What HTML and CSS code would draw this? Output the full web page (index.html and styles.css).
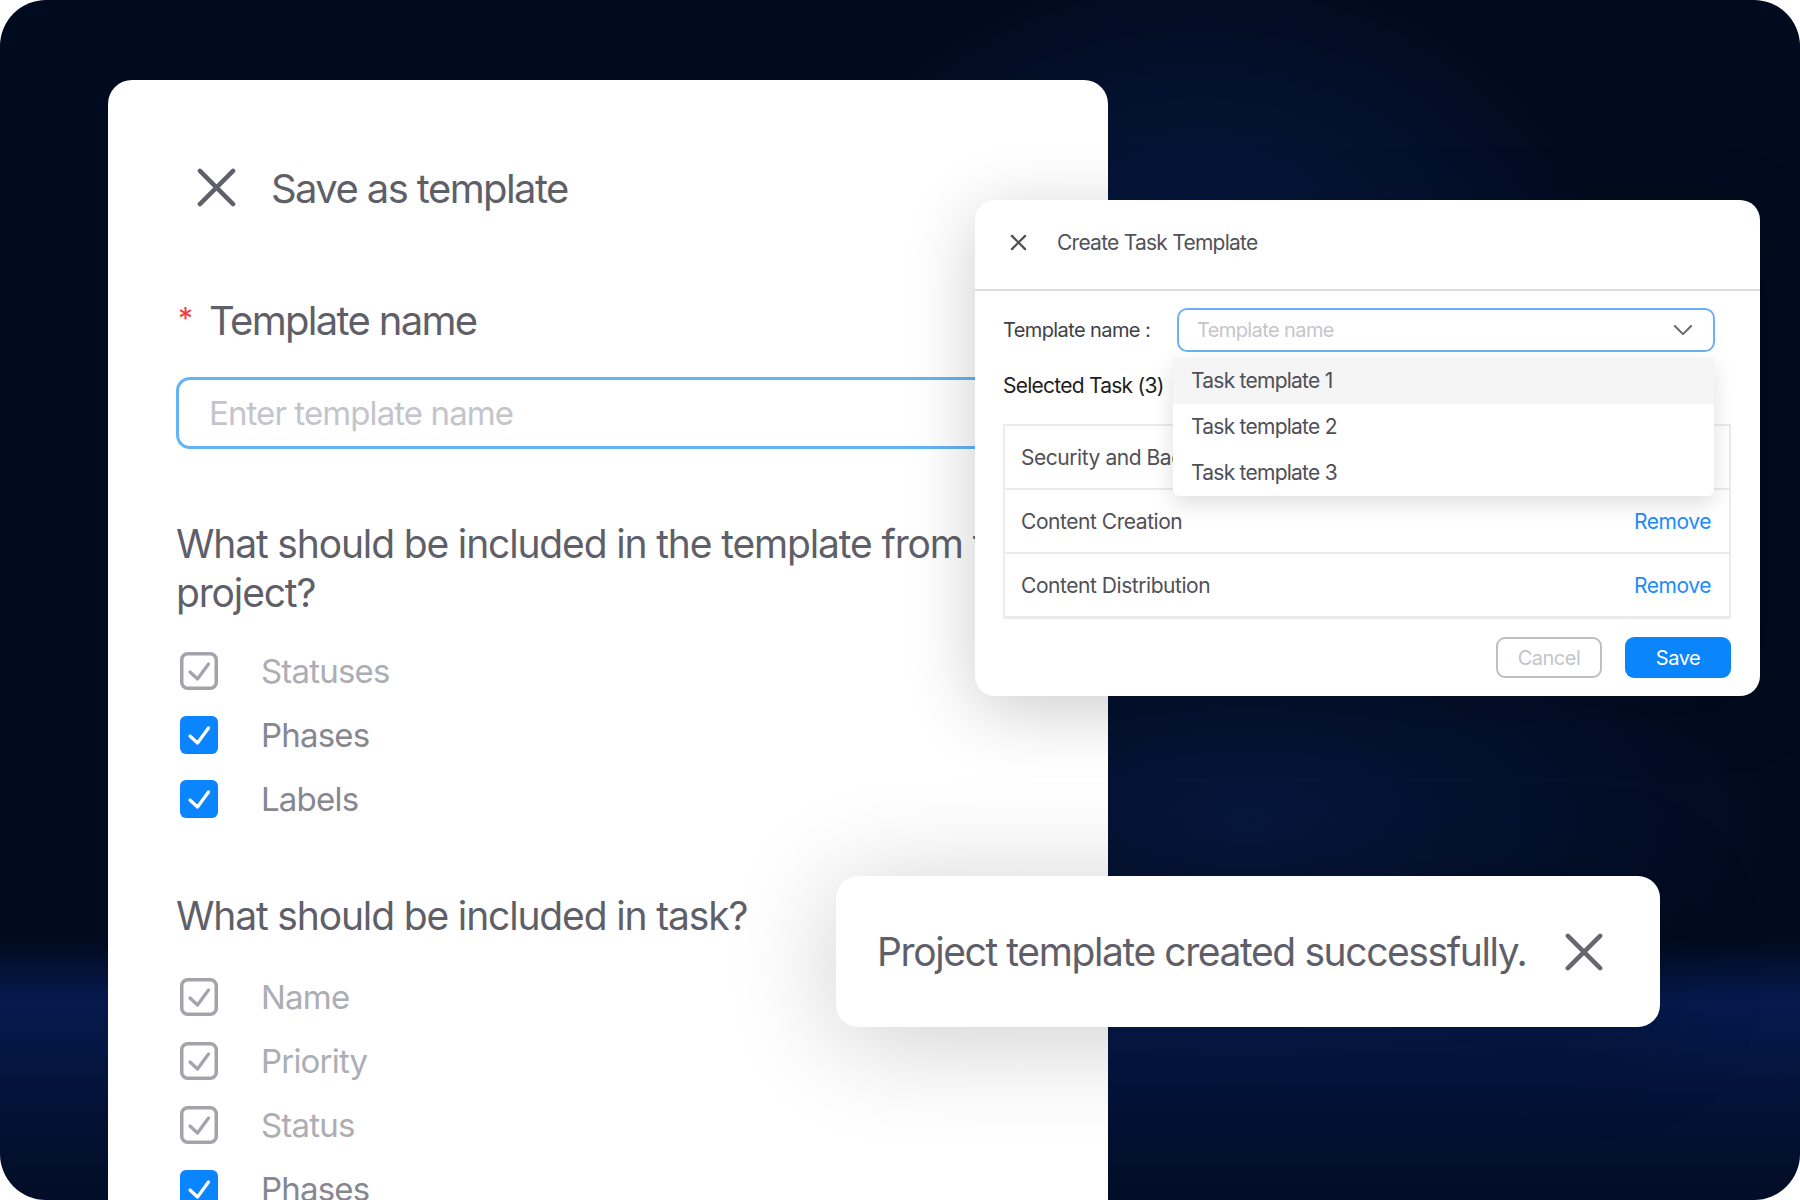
FILE: index.html
```html
<!DOCTYPE html>
<html lang="en">
<head>
<meta charset="utf-8">
<title>Save as template</title>
<link rel="stylesheet" href="styles.css">
</head>
<body>
<div class="frame">
  <section class="panel">
    <header class="panel-head">
      <svg class="x-big" viewBox="0 0 40 40"><path d="M3 3 L37 37 M37 3 L3 37"/></svg>
      <h1 class="panel-title">Save as template</h1>
    </header>
    <div class="field-label"><span class="req">*</span>Template name</div>
    <div class="text-input">Enter template name</div>
    <h2 class="question q1">What should be included in the template from the project?</h2>
    <ul class="checks">
      <li class="check disabled"><svg class="box" viewBox="0 0 38 38"><rect x="1.75" y="1.75" width="34.5" height="34.5" rx="6"/><path d="M10 20 L17.5 27 L28.5 12"/></svg><span>Statuses</span></li>
      <li class="check on"><svg class="box" viewBox="0 0 38 38"><rect x="0" y="0" width="38" height="38" rx="6"/><path d="M10 20 L17.5 27 L28.5 12"/></svg><span>Phases</span></li>
      <li class="check on"><svg class="box" viewBox="0 0 38 38"><rect x="0" y="0" width="38" height="38" rx="6"/><path d="M10 20 L17.5 27 L28.5 12"/></svg><span>Labels</span></li>
    </ul>
    <h2 class="question q2">What should be included in task?</h2>
    <ul class="checks checks-task">
      <li class="check disabled"><svg class="box" viewBox="0 0 38 38"><rect x="1.75" y="1.75" width="34.5" height="34.5" rx="6"/><path d="M10 20 L17.5 27 L28.5 12"/></svg><span>Name</span></li>
      <li class="check disabled"><svg class="box" viewBox="0 0 38 38"><rect x="1.75" y="1.75" width="34.5" height="34.5" rx="6"/><path d="M10 20 L17.5 27 L28.5 12"/></svg><span>Priority</span></li>
      <li class="check disabled"><svg class="box" viewBox="0 0 38 38"><rect x="1.75" y="1.75" width="34.5" height="34.5" rx="6"/><path d="M10 20 L17.5 27 L28.5 12"/></svg><span>Status</span></li>
      <li class="check on"><svg class="box" viewBox="0 0 38 38"><rect x="0" y="0" width="38" height="38" rx="6"/><path d="M10 20 L17.5 27 L28.5 12"/></svg><span>Phases</span></li>
    </ul>
  </section>

  <div class="modal">
    <div class="modal-head">
      <svg class="x-small" viewBox="0 0 18 18"><path d="M2 2 L16 16 M16 2 L2 16"/></svg>
      <span class="modal-title">Create Task Template</span>
    </div>
    <div class="modal-body">
      <div class="name-row">
        <span class="name-label">Template name :</span>
        <div class="select">
          <span class="select-ph">Template name</span>
          <svg class="chev" viewBox="0 0 22 14"><path d="M2 2 L11 11 L20 2"/></svg>
        </div>
      </div>
      <div class="selected-title">Selected Task (3)</div>
      <div class="task-table">
        <div class="task-row"><span>Security and Backup</span><a class="remove">Remove</a></div>
        <div class="task-row"><span>Content Creation</span><a class="remove">Remove</a></div>
        <div class="task-row"><span>Content Distribution</span><a class="remove">Remove</a></div>
      </div>
      <div class="modal-foot">
        <button class="btn btn-cancel">Cancel</button>
        <button class="btn btn-save">Save</button>
      </div>
      <ul class="dropdown">
        <li class="dd-item active">Task template 1</li>
        <li class="dd-item">Task template 2</li>
        <li class="dd-item">Task template 3</li>
      </ul>
    </div>
  </div>

  <div class="toast">
    <span class="toast-text">Project template created successfully.</span>
    <svg class="x-toast" viewBox="0 0 40 40"><path d="M3 3 L37 37 M37 3 L3 37"/></svg>
  </div>
</div>
</body>
</html>
```

FILE: styles.css
```css
* { box-sizing: border-box; }

html, body {
  margin: 0;
  padding: 0;
  background: #ffffff;
}

body {
  font-family: Inter, "Noto Sans", "Liberation Sans", sans-serif;
}

.frame {
  position: relative;
  width: 1800px;
  height: 1200px;
  border-radius: 46px;
  overflow: hidden;
  padding: 80px 0 0 108px;
  background:
    linear-gradient(to bottom, rgba(6, 28, 86, 0) 0, rgba(6, 28, 86, 0) 940px, rgba(6, 28, 86, 0.85) 1000px, rgba(6, 28, 86, 0.4) 1110px, rgba(6, 28, 86, 0.15) 1200px),
    radial-gradient(ellipse 420px 360px at 1200px 330px, rgba(12, 34, 88, 0.75), rgba(12, 34, 88, 0) 100%),
    radial-gradient(ellipse 520px 260px at 1250px 820px, rgba(10, 30, 80, 0.6), rgba(10, 30, 80, 0) 100%),
    #010b1f;
}

/* ---------- left panel ---------- */
.panel {
  width: 1000px;
  height: 1200px;
  background: #ffffff;
  border-radius: 24px 24px 0 0;
  padding: 81px 60px 0 68px;
  color: #5f5f69;
}

.panel-head {
  display: flex;
  align-items: center;
  gap: 35px;
  height: 56px;
  padding-left: 21px;
}

.x-big {
  width: 39px;
  height: 39px;
  flex: none;
  margin-top: -3px;
}
.x-big path {
  fill: none;
  stroke: #606069;
  stroke-width: 4.6;
  stroke-linecap: round;
}

.panel-title {
  margin: 0;
  font-size: 40px;
  font-weight: 400;
  letter-spacing: -1.6px;
  color: #5f5f69;
  line-height: 56px;
}

.field-label {
  margin-top: 80px;
  font-size: 40px;
  line-height: 48px;
  letter-spacing: -1.7px;
  color: #5f5f69;
  display: flex;
  align-items: flex-start;
}

.req {
  color: #f2413d;
  font-size: 30px;
  line-height: 30px;
  margin: 6px 16px 0 2px;
  letter-spacing: 0;
}

.text-input {
  margin-top: 32px;
  height: 72px;
  border: 3px solid #62b3f8;
  border-radius: 14px;
  padding-left: 30px;
  display: flex;
  align-items: center;
  font-size: 33px;
  letter-spacing: -0.9px;
  color: #c4c4cb;
}

.question {
  margin: 0;
  font-size: 39px;
  font-weight: 400;
  line-height: 49px;
  letter-spacing: -1.15px;
  color: #5f5f69;
}
.q1 { margin-top: 70px; }
.q2 { margin-top: 60px; }

.checks {
  list-style: none;
  margin: 22px 0 0 0;
  padding: 0;
}
.checks-task { margin-top: 25px; }

.check {
  height: 64px;
  display: flex;
  align-items: center;
  font-size: 33px;
  letter-spacing: -0.8px;
}

.box {
  width: 38px;
  height: 38px;
  margin-left: 4px;
  margin-right: 43px;
  flex: none;
}
.box path {
  fill: none;
  stroke-width: 3.2;
  stroke-linecap: round;
  stroke-linejoin: round;
}

.check.disabled { color: #adadb4; }
.check.disabled rect { fill: none; stroke: #a3a3ab; stroke-width: 3.5; }
.check.disabled path { stroke: #a3a3ab; }

.check.on { color: #878791; }
.check.on rect { fill: #0a84ff; }
.check.on path { stroke: #ffffff; }

/* ---------- modal ---------- */
.modal {
  position: absolute;
  left: 975px;
  top: 200px;
  width: 785px;
  background: #ffffff;
  border-radius: 20px;
  box-shadow: 0 14px 70px rgba(0, 0, 0, 0.2);
}

.modal-head {
  height: 91px;
  display: flex;
  align-items: center;
  gap: 30px;
  padding-left: 35px;
  padding-bottom: 4px;
  border-bottom: 2px solid #dcdcdc;
}

.x-small {
  width: 17px;
  height: 17px;
  flex: none;
}
.x-small path {
  fill: none;
  stroke: #4f4f55;
  stroke-width: 2.4;
  stroke-linecap: round;
}

.modal-title {
  font-size: 21px;
  letter-spacing: -0.75px;
  color: #52525a;
}

.modal-body {
  position: relative;
  padding: 17px 29px 18px 28px;
}

.name-row {
  display: flex;
  align-items: center;
  height: 44px;
}

.name-label {
  width: 174px;
  flex: none;
  font-size: 20px;
  letter-spacing: -0.6px;
  color: #3f3f46;
}

.select {
  width: 538px;
  height: 44px;
  border: 2px solid #6ab2f5;
  border-radius: 10px;
  display: flex;
  align-items: center;
  justify-content: space-between;
  padding: 0 20px 0 18px;
}

.select-ph {
  font-size: 20px;
  letter-spacing: -0.6px;
  color: #c6c6c9;
}

.chev {
  width: 20px;
  height: 13px;
}
.chev path {
  fill: none;
  stroke: #66666c;
  stroke-width: 2.2;
  stroke-linecap: round;
  stroke-linejoin: round;
}

.selected-title {
  margin-top: 19px;
  line-height: 30px;
  font-size: 21px;
  letter-spacing: -0.75px;
  color: #1e1e22;
}

.task-table {
  margin-top: 23px;
  border: 2px solid #ebebeb;
  border-bottom-width: 1px;
}

.task-row {
  height: 64px;
  display: flex;
  align-items: center;
  justify-content: space-between;
  padding: 0 18px 0 16px;
  border-bottom: 2px solid #ebebeb;
  font-size: 21px;
  letter-spacing: -0.45px;
  color: #505057;
}

.remove {
  color: #1c8bfb;
}

.modal-foot {
  margin-top: 18px;
  display: flex;
  justify-content: flex-end;
  gap: 23px;
}

.btn {
  width: 106px;
  height: 41px;
  border-radius: 9px;
  font-family: Inter, "Noto Sans", "Liberation Sans", sans-serif;
  font-size: 20px;
  letter-spacing: -0.5px;
  padding: 0;
}
.btn-cancel {
  background: #ffffff;
  border: 2px solid #bfbfc2;
  color: #c4c4c8;
}
.btn-save {
  background: #0b85fc;
  border: none;
  color: #ffffff;
}

.dropdown {
  position: absolute;
  left: 198px;
  top: 67px;
  width: 541px;
  margin: 0;
  padding: 0;
  list-style: none;
  background: #ffffff;
  border-radius: 0 0 6px 6px;
  box-shadow: 0 8px 22px rgba(0, 0, 0, 0.13);
}

.dd-item {
  height: 46px;
  display: flex;
  align-items: center;
  padding-left: 18px;
  padding-bottom: 2px;
  font-size: 21px;
  letter-spacing: -0.75px;
  color: #4f4f58;
}
.dd-item.active {
  background: #f5f5f5;
}

/* ---------- toast ---------- */
.toast {
  position: absolute;
  left: 836px;
  top: 876px;
  width: 824px;
  height: 151px;
  background: #ffffff;
  border-radius: 22px;
  display: flex;
  align-items: center;
  gap: 39px;
  padding-left: 41px;
  box-shadow: 0 12px 110px rgba(0, 0, 0, 0.2);
}

.toast-text {
  font-size: 39px;
  letter-spacing: -1.4px;
  color: #5f5f69;
}

.x-toast {
  width: 38px;
  height: 38px;
  flex: none;
}
.x-toast path {
  fill: none;
  stroke: #66666e;
  stroke-width: 4.8;
  stroke-linecap: round;
}
```
